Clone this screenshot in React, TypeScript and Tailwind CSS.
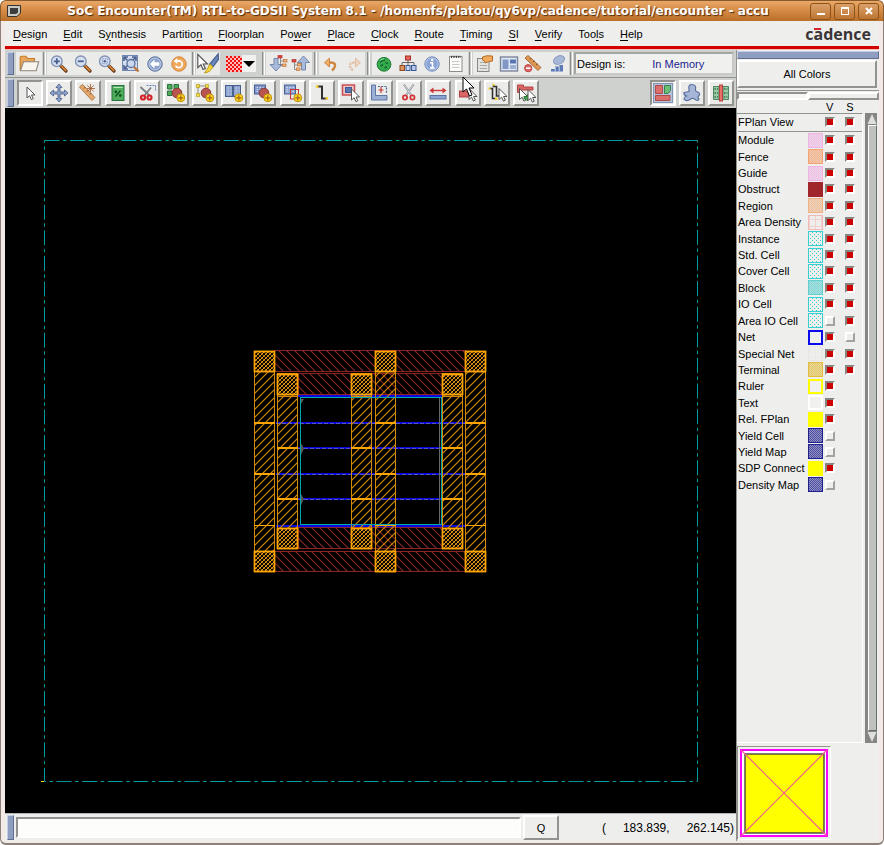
import React, { useId, useState } from "react";

const RAISED = "border-2 border-t-white border-l-white border-b-[#92938f] border-r-[#92938f]";
const SUNKEN = "border-2 border-t-[#92938f] border-l-[#92938f] border-b-white border-r-white";

function Icon({ children, size = "size-5" }: { children: React.ReactNode; size?: string }) {
  return (
    <svg viewBox="0 0 20 20" className={`${size} shrink-0`} fill="none" aria-hidden="true">
      {children}
    </svg>
  );
}

const blue = "#4a6190";
const paleBlue = "#a9bbdd";

function Lens({ children }: { children?: React.ReactNode }) {
  return (
    <Icon>
      <path d="M11.5 11.5 L17 17" stroke="#6b3d1c" strokeWidth="3.4" strokeLinecap="round" />
      <path d="M12 11.7 L16.6 16.4" stroke="#d98436" strokeWidth="1.6" strokeLinecap="round" />
      <circle cx="7.8" cy="7.3" r="5.3" fill="#d7e1f3" stroke="#8393b3" strokeWidth="1.4" />
      {children}
    </Icon>
  );
}

const Pointer = ({ x, y }: { x: number; y: number }) => (
  <path
    transform={`translate(${x} ${y})`}
    d="M0 0 V11 L2.6 8.7 L4.4 12.6 L6.3 11.7 L4.5 8 H8 Z"
    fill="#fff"
    stroke="#555"
    strokeWidth="1"
  />
);

const Plus = () => (
  <>
    <circle cx="14.8" cy="14.8" r="3.9" fill="#ffd91c" stroke="#c08d0a" />
    <path d="M14.8 12.2 V17.4 M12.2 14.8 H17.4" stroke="#a3631a" strokeWidth="1.2" />
  </>
);

const Ball = () => <circle cx="11" cy="10" r="4.8" fill="#b85550" stroke="#8a3532" />;

const Boxes = () => (
  <>
    <path d="M10 6 V8 M4 11 V8.5 H16 V11 M10 8.5 V11" stroke="#666" />
    <rect x="7.5" y="2" width="5" height="4" fill="#e8675c" stroke="#a22d27" />
    <rect x="2" y="11.5" width="4.5" height="5" fill="#e0945c" stroke="#8e4b23" />
    <rect x="8" y="11.5" width="4" height="5" fill="#c9d8f5" stroke="#395a91" />
    <rect x="13.5" y="11.5" width="4.5" height="5" fill="#b8c9eb" stroke="#395a91" />
  </>
);

const MiniTree = ({ x, y }: { x: number; y: number }) => (
  <g transform={`translate(${x} ${y})`}>
    <path d="M3 3 V10.5 H6 M3 6 H7" stroke="#777" strokeWidth="0.8" />
    <rect x="0.5" y="0.5" width="4" height="2.5" fill="#d9433c" stroke="#b83a34" strokeWidth="0.7" />
    <rect x="6" y="4.5" width="3.5" height="2.5" fill="#f5b177" stroke="#c0723a" strokeWidth="0.7" />
    <rect x="5" y="9" width="3.5" height="2.5" fill="#f5b177" stroke="#c0723a" strokeWidth="0.7" />
  </g>
);

const Grid = ({ x, y, w, h, fill, stroke }: { x: number; y: number; w: number; h: number; fill: string; stroke: string }) => (
  <>
    <rect x={x} y={y} width={w} height={h} fill={fill} stroke={stroke} />
    <path d={`M${x + 2} ${y + 2.5} H${x + w - 1} M${x + 2} ${y + h / 2} H${x + w - 1} M${x + 2} ${y + h - 2.5} H${x + w - 1}`} stroke="#e3eafa" strokeWidth="0.8" strokeDasharray="1.5 1.5" />
  </>
);

const Scissors = () => (
  <>
    <path d="M5 1.5 L12.5 12.5 M14.5 1.5 L7 12.5" stroke="#8f959c" strokeWidth="2" />
    <path d="M5.5 2 L12.5 12.5 M14 2 L7 12.5" stroke="#e7eaee" strokeWidth="0.7" />
    <circle cx="6" cy="14.5" r="2.1" stroke="#d3333a" strokeWidth="1.8" />
    <circle cx="13.4" cy="14.5" r="2.1" stroke="#d3333a" strokeWidth="1.8" />
  </>
);

const icons = {
  open: (
    <Icon size="size-[22px]">
      <path d="M2 16 V4 Q2 3 3 3 H7 L9 5 H15 V8" fill="#e9a65b" stroke="#c57a2c" />
      <path d="M2.2 16.2 L5 8 H18.8 L16.5 16.2 Z" fill="#f8f5ee" stroke="#8d8479" />
    </Icon>
  ),
  zoomIn: (
    <Lens>
      <path d="M7.8 4.3 V10.3 M4.8 7.3 H10.8" stroke={blue} strokeWidth="1.8" />
    </Lens>
  ),
  zoomOut: (
    <Lens>
      <path d="M4.8 7.3 H10.8" stroke={blue} strokeWidth="1.8" />
    </Lens>
  ),
  zoomSel: (
    <Lens>
      <rect x="5.3" y="4.8" width="5" height="5" stroke="#7d91ba" strokeDasharray="1.5 1" />
      <circle cx="7.8" cy="7.3" r="1.3" fill={blue} />
    </Lens>
  ),
  fit: (
    <Icon>
      <rect x="1.5" y="1.5" width="15" height="15" fill="#d5def0" stroke="#7187b1" />
      <path d="M3 7 V3 H7 M11 3 H15 V7 M3 11 V15 H7 M3 3 L6.5 6.5 M15 3 L12 6 M3 15 L6.5 11.5" stroke={blue} strokeWidth="1.6" />
      <circle cx="10" cy="9.5" r="4" fill="#cbd8ef" stroke="#5b729c" strokeWidth="1.3" />
      <path d="M13 13 L17.5 17.5" stroke="#bd7435" strokeWidth="2.4" />
    </Icon>
  ),
  prev: (
    <Icon>
      <circle cx="10" cy="10" r="7.2" fill="#8fa5cb" stroke="#5b719b" />
      <circle cx="10" cy="10" r="5.9" stroke="#c3d0e8" strokeWidth="0.8" />
      <path d="M5 10 L9.5 5.5 V8.2 H14.3 V11.8 H9.5 V14.5 Z" fill="#fff" />
    </Icon>
  ),
  redraw: (
    <Icon>
      <circle cx="10" cy="10" r="7.2" fill="#f0a85c" stroke="#d58436" />
      <path d="M7 7 H11 A3.4 3.4 0 1 1 6.8 11.6" stroke="#fff" strokeWidth="1.8" />
      <path d="M4.7 7 L8.3 4 V10 Z" fill="#fff" />
    </Icon>
  ),
  brush: (
    <Icon size="size-6">
      <Pointer x={1.5} y={2} />
      <path d="M18.5 1.5 L11.5 10 L14 12.5 L18.8 6 Z" fill="#6d86bb" stroke="#4a6290" />
      <path d="M11.5 10 L14 12.5 Q12 17 7 17.5 Q10 14 11.5 10 Z" fill="#f6d536" stroke="#b99b22" strokeWidth="0.8" />
    </Icon>
  ),
  descend: (
    <Icon>
      <path d="M6 4.5 H10 V10.5 H14 L8 17 L2 10.5 H6 Z" fill={paleBlue} stroke="#7587a9" />
      <MiniTree x={9.5} y={1} />
    </Icon>
  ),
  ascend: (
    <Icon>
      <path d="M10.5 16 V8.5 H6.5 L12.5 2 L18.5 8.5 H14.5 V16 Z" fill={paleBlue} stroke="#7587a9" />
      <MiniTree x={0.5} y={5} />
    </Icon>
  ),
  undo: (
    <Icon>
      <path d="M6 8.5 H10 Q14.5 8.8 14 12 Q13.5 14.5 11 16.5" stroke="#cf8440" strokeWidth="2.4" />
      <path d="M3.5 8.6 L8.5 4.2 V13 Z" fill="#f0ae67" stroke="#cf8440" />
    </Icon>
  ),
  redo: (
    <Icon>
      <g opacity=".5">
        <path d="M14 8.5 H10 Q5.5 8.8 6 12 Q6.5 14.5 9 16.5" stroke="#dd9d6d" strokeWidth="2.4" strokeDasharray="2.5 0.8" />
        <path d="M16.5 8.6 L11.5 4.2 V13 Z" fill="#efc39c" stroke="#d58f5b" />
      </g>
    </Icon>
  ),
  attribute: (
    <Icon>
      <circle cx="10" cy="10.3" r="6.9" fill="#35ab4e" stroke="#207a35" />
      <path d="M6 8.5 Q8 5.5 11 6.3 M6.5 12.3 L9 10.5 M11.5 8.5 L14 9.8 M10.5 13.8 L13 12.8" stroke="#15702f" strokeWidth="1.8" />
      <path d="M6.2 6.5 Q8 4.8 10 4.8" stroke="#a2e6af" />
    </Icon>
  ),
  hierarchy: (
    <Icon>
      <Boxes />
    </Icon>
  ),
  info: (
    <Icon>
      <circle cx="10" cy="10" r="7.2" fill="#b4c6e9" stroke="#7188b8" />
      <circle cx="10" cy="10" r="5.6" fill="#8aa4d6" />
      <path d="M8 8.8 H10.5 V13.8 M8 13.9 H12.4" stroke="#fff" strokeWidth="1.6" />
      <circle cx="10.2" cy="6" r="1.2" fill="#fff" />
    </Icon>
  ),
  notes: (
    <Icon>
      <rect x="3.5" y="2.5" width="12.5" height="15" fill="#fbfbf9" stroke="#8c8c88" />
      <path d="M5 2.8 H15" stroke="#444" strokeWidth="2.2" strokeDasharray="1.2 1.2" />
      <path d="M6 7.5 H13.5 M6 10.5 H13.5 M6 13.5 H13.5" stroke="#c9cac6" />
    </Icon>
  ),
  properties: (
    <Icon>
      <rect x="2.5" y="4.5" width="11.5" height="13" fill="#e3e4e1" stroke="#888" />
      <path d="M5 8.5 H12 M5 11.5 H12 M5 14.5 H12" stroke="#a9aba8" />
      <path d="M7.5 3 Q11 1 17.5 2 V7 Q13 7.5 10.5 9 L9.5 7 L7.5 6 Z" fill="#f3a95b" stroke="#b06d29" />
    </Icon>
  ),
  panes: (
    <Icon>
      <rect x="1.5" y="3" width="17" height="14" fill="#dfe6f4" stroke="#7c859a" strokeWidth="1.4" />
      <rect x="3.5" y="5.5" width="6" height="9.5" fill="#8197c6" />
      <rect x="11" y="5.5" width="6" height="4" fill="#5a76b2" />
      <rect x="11" y="11" width="6" height="4" fill="#9eb0d6" />
    </Icon>
  ),
  clearRuler: (
    <Icon>
      <path d="M2 4 L5 1.5 L18 13.5 L15 16.5 Z" fill="#df9854" stroke="#a86c36" />
      <path d="M7 5.5 L8.5 4 M10 8 L11.5 6.8 M13 11 L14.5 9.8" stroke="#7e4c22" />
      <circle cx="5.2" cy="14.2" r="3.6" fill="#dc6663" stroke="#bf4444" />
      <path d="M3 14.2 H7.5" stroke="#fff" strokeWidth="1.6" />
    </Icon>
  ),
  summary: (
    <Icon>
      <ellipse cx="12" cy="6" rx="5.8" ry="4" transform="rotate(-25 12 6)" fill="#a7b7d8" stroke="#8b9dc0" />
      <path d="M4 17.5 V15 H8 V12.5 H12 V11 H16 V17.5 Z" fill="#5c79b7" />
      <path d="M8.2 17.5 V13 M12.2 17.5 V11.5" stroke="#cad6ed" />
    </Icon>
  ),
  select: (
    <Icon>
      <Pointer x={7} y={4} />
    </Icon>
  ),
  move: (
    <Icon>
      <path d="M10 1 L13 4.5 H11 V9 H15.5 V7 L19 10 L15.5 13 V11 H11 V15.5 H13 L10 19 L7 15.5 H9 V11 H4.5 V13 L1 10 L4.5 7 V9 H9 V4.5 H7 Z" fill="#94a9d0" stroke="#4f648d" strokeWidth="0.9" />
    </Icon>
  ),
  ruler: (
    <Icon>
      <path d="M1.5 4 L4.5 1.5 L17 14.5 L14 17.5 Z" fill="#e6a76c" stroke="#b07a48" />
      <path d="M6 5.5 L7.5 4 M9 8.5 L10.5 7 M12 11.5 L13.5 10" stroke="#7e4c22" />
      <path d="M12.5 1 V9 M17 5.5 H9 M15.8 2.3 L9.6 8.5 M9.2 2.3 L15.8 8.5" stroke="#a4552a" strokeWidth="0.8" />
    </Icon>
  ),
  density: (
    <Icon>
      <rect x="4" y="2.5" width="12" height="15" fill="#4fae5c" stroke="#2a7040" />
      <path d="M5.5 4.5 H14.5" stroke="#b9e6bd" />
      <path d="M7.5 13.5 L12.5 7.5" stroke="#0d5721" strokeWidth="1.4" />
      <circle cx="7.8" cy="8.8" r="1.4" fill="#0d5721" />
      <circle cx="12.3" cy="12.5" r="1.4" fill="#0d5721" />
    </Icon>
  ),
  cutRow: (
    <Icon>
      <path d="M9.5 2.5 H18.5 M18.5 2.5 V8" stroke="#6984c4" strokeDasharray="2 1" />
      <path d="M3.5 4 L12.5 12.5 M14 4.5 L7.5 12.5" stroke="#7c8085" strokeWidth="1.8" />
      <circle cx="6" cy="14.5" r="2" stroke="#d3222a" strokeWidth="2.2" />
      <circle cx="12.5" cy="14.5" r="2" stroke="#d3222a" strokeWidth="2.2" />
    </Icon>
  ),
  addGroup: (
    <Icon>
      <path d="M1.5 1.5 H6 V6 H1.5 Z M8 1.5 H12.5 V6 H8 Z M1.5 8 H6 V12.5 H1.5 Z" fill="#4cad58" stroke="#2b7040" />
      <Ball />
      <Plus />
    </Icon>
  ),
  addFence: (
    <Icon>
      <path d="M3 3 H12 M3 3 V12" stroke="#888" />
      <path d="M1.5 1.5 H4.5 V4.5 H1.5 Z M10.5 1.5 H13.5 V4.5 H10.5 Z M1.5 10.5 H4.5 V13.5 H1.5 Z" fill="#f8df36" stroke="#b39922" strokeWidth="0.7" />
      <Ball />
      <Plus />
    </Icon>
  ),
  addGuide: (
    <Icon>
      <Grid x={1.5} y={2.5} w={7} h={11} fill="#8fa5d1" stroke={blue} />
      <Grid x={9.5} y={2.5} w={7} h={11} fill="#8fa5d1" stroke={blue} />
      <Plus />
    </Icon>
  ),
  addRegion: (
    <Icon>
      <Grid x={1.5} y={2} w={11} h={9} fill="#7f96c9" stroke={blue} />
      <Ball />
      <Plus />
    </Icon>
  ),
  addBlockage: (
    <Icon>
      <Grid x={1.5} y={2} w={11} h={9} fill="#8fa5d1" stroke={blue} />
      <path d="M7.5 6.5 H15.5 V16 H7.5 Z" stroke="#c73535" strokeWidth="1.1" />
      <Plus />
    </Icon>
  ),
  wire: (
    <Icon>
      <path d="M5.5 3.5 H10 V15.5 H15" stroke="#303030" strokeWidth="2" />
      <path d="M4 2.3 H6.5 V4.8 H4 Z M13.5 14 H16 V16.5 H13.5 Z" fill="#f2cf2e" />
    </Icon>
  ),
  moveBox: (
    <Icon>
      <rect x="1.5" y="2" width="12" height="10" fill="#eec8c8" stroke="#cb4c50" strokeWidth="1.5" />
      <rect x="4.5" y="4.5" width="6" height="5" fill="#5875b4" stroke="#3e5996" />
      <Pointer x={10.5} y={6} />
    </Icon>
  ),
  rowBox: (
    <Icon>
      <path d="M1.5 2 H5.5 V12.5 H17 V17 H1.5 Z" fill="#9cafd6" stroke="#5f76a3" />
      <path d="M8 3.5 H16.5 V10" stroke={blue} strokeDasharray="2 1.2" strokeWidth="1.2" />
      <path d="M11 4 V10 M8.5 7 H13.5" stroke="#c73535" strokeWidth="1.2" />
    </Icon>
  ),
  cut: (
    <Icon>
      <Scissors />
    </Icon>
  ),
  stretch: (
    <Icon>
      <path d="M3 7.5 H17" stroke="#cc3636" strokeWidth="1.4" />
      <path d="M1.5 7.5 L5.5 4.5 V10.5 Z M18.5 7.5 L14.5 4.5 V10.5 Z" fill="#cc3636" />
      <rect x="2" y="12.5" width="16" height="3.5" fill="#8da4d2" stroke="#5b719d" />
    </Icon>
  ),
  moveWire: (
    <Icon>
      <rect x="1.5" y="8" width="12" height="6" fill="#d96564" stroke="#af4444" />
      <Pointer x={11} y={5.5} />
    </Icon>
  ),
  editWire: (
    <Icon>
      <path d="M2.5 5.5 H5.5 V15.5 H9 M6.5 1.5 V3.5 H9.5 V13 H12" stroke="#303030" strokeWidth="1.6" />
      <path d="M1.5 4.5 H3.5 V6.5 H1.5 Z M8 14.5 H10.5 V17 H8 Z M5.5 0.8 H7.5 V2.8 H5.5 Z" fill="#f2cf2e" />
      <Pointer x={12} y={5.5} />
    </Icon>
  ),
  changeLayer: (
    <Icon>
      <path d="M1.5 2 H7.5 V4 H17 V7 H5.5 V9.5 H1.5 Z" fill="#d96564" stroke="#b34848" />
      <Pointer x={3.5} y={5.5} />
      <path d="M8 13.5 H11 V11.5 L14.5 14.7 L11 18 V16 H8 Z" fill="#43b052" stroke="#206c2e" strokeWidth="0.7" />
      <Pointer x={12} y={6.5} />
    </Icon>
  ),
  floorplanView: (
    <Icon>
      <rect x="0.5" y="0.5" width="19" height="19" fill="#b4c2dc" stroke="#8194b6" />
      <path d="M2.5 2.5 H9.5 V10.5 H2.5 Z M2.5 12.5 H17 V17.5 H2.5 Z" fill="#da6e6a" stroke="#b04a49" />
      <path d="M11.5 2.5 H17.5 V7.5 L15 10.5 H11.5 Z" fill="#6abf75" stroke="#33854b" />
    </Icon>
  ),
  amoebaView: (
    <Icon>
      <path d="M7 6 Q6 1.5 10 1.5 Q14.5 1.5 13.5 6.5 Q13 8.5 16 9 Q19 11 16.5 13 Q15 14.5 17 16 Q16.5 18 14 17 Q10.5 14 8 16.5 Q4 19 2 16 Q2.5 13.5 4.5 13 Q1.5 12 2 9.5 Q5 9 7 8.5 Z" fill="#a5b6d9" stroke="#5b719d" strokeWidth="1.2" />
    </Icon>
  ),
  physicalView: (
    <Icon>
      <path d="M2.5 3.5 H8 V16.5 H2.5 Z M12 3.5 H17.5 V16.5 H12 Z" fill="#9bcaa6" stroke="#4d8560" />
      <path d="M3.5 6 H7 M3.5 10 H7 M3.5 14 H7 M13 6 H16.5 M13 10 H16.5 M13 14 H16.5" stroke="#3b704c" strokeWidth="1.4" strokeDasharray="1.5 1" />
      <rect x="8.5" y="2" width="3" height="16" fill="#e57168" stroke="#b5433d" />
    </Icon>
  ),
};

type IconName = keyof typeof icons;

const menus: [string, number][] = [
  ["Design", 0], ["Edit", 0], ["Synthesis", 1], ["Partition", 8], ["Floorplan", 0], ["Power", 2], ["Place", 0],
  ["Clock", 0], ["Route", 0], ["Timing", 0], ["SI", 0], ["Verify", 0], ["Tools", 3], ["Help", 0],
];

function Handle() {
  return <div className="w-[7px] shrink-0 border border-t-[#c4cfe6] border-l-[#c4cfe6] border-r-[#5f6f92] border-b-[#5f6f92] bg-[#8e9dc0]" />;
}

function Separator({ wide = false }: { wide?: boolean }) {
  return <div className={`${wide ? "mx-[2px]" : "mx-px"} w-[3px] shrink-0 border-r border-l border-r-white border-l-[#8c8d8a] bg-[#c9cac7]`} />;
}

function ToolGroup({ names, cell = "w-6" }: { names: IconName[]; cell?: string }) {
  return (
    <div className="flex shrink-0 bg-[#ebecea]">
      {names.map((n) => (
        <button key={n} type="button" aria-label={n} className={`${cell} flex items-center justify-center`}>
          {icons[n]}
        </button>
      ))}
    </div>
  );
}

function ToolButton({ name, pressed = false }: { name: IconName; pressed?: boolean }) {
  return (
    <button
      type="button"
      aria-label={name}
      aria-pressed={pressed}
      className={`flex size-[26px] shrink-0 items-center justify-center bg-[#ebecea] ${pressed ? SUNKEN : RAISED}`}
    >
      {icons[name]}
    </button>
  );
}

const editTools: IconName[] = [
  "select", "move", "ruler", "density", "cutRow", "addGroup", "addFence", "addGuide", "addRegion",
  "addBlockage", "wire", "moveBox", "rowBox", "cut", "stretch", "moveWire", "editWire", "changeLayer",
];

type Fill = "fine" | "dots" | "solid" | "empty" | "grid";
interface Layer {
  name: string;
  fill?: Fill;
  color?: string;
  v: boolean;
  s?: boolean;
}

const layers: Layer[] = [
  { name: "Module", fill: "fine", color: "#eeb4e4", v: true, s: true },
  { name: "Fence", fill: "fine", color: "#f3a271", v: true, s: true },
  { name: "Guide", fill: "fine", color: "#eeb4e4", v: true, s: true },
  { name: "Obstruct", fill: "solid", color: "#a0262b", v: true, s: true },
  { name: "Region", fill: "fine", color: "#eeb283", v: true, s: true },
  { name: "Area Density", fill: "grid", color: "#f2b9b9", v: true, s: true },
  { name: "Instance", fill: "dots", color: "#35d0cf", v: true, s: true },
  { name: "Std. Cell", fill: "dots", color: "#35d0cf", v: true, s: true },
  { name: "Cover Cell", fill: "dots", color: "#35d0cf", v: true, s: true },
  { name: "Block", fill: "fine", color: "#5fcfcf", v: true, s: true },
  { name: "IO Cell", fill: "dots", color: "#35d0cf", v: true, s: true },
  { name: "Area IO Cell", fill: "dots", color: "#35d0cf", v: false, s: true },
  { name: "Net", fill: "empty", color: "#0a0aee", v: true, s: false },
  { name: "Special Net", fill: "grid", color: "#e6e7e6", v: true, s: true },
  { name: "Terminal", fill: "fine", color: "#e3bc3c", v: true, s: true },
  { name: "Ruler", fill: "empty", color: "#ffff00", v: true },
  { name: "Text", fill: "empty", color: "#ffffff", v: true },
  { name: "Rel. FPlan", fill: "solid", color: "#ffff00", v: true },
  { name: "Yield Cell", fill: "fine", color: "#20208f", v: false },
  { name: "Yield Map", fill: "fine", color: "#20208f", v: false },
  { name: "SDP Connect", fill: "solid", color: "#ffff00", v: true },
  { name: "Density Map", fill: "fine", color: "#20208f", v: false },
];

function Swatch({ fill, color }: { fill: Fill; color: string }) {
  const id = useId();
  const thick = fill === "empty" ? 2 : 1;
  return (
    <svg viewBox="0 0 15 15" className="size-[15px]" aria-hidden="true">
      <defs>
        {fill === "fine" && (
          <pattern id={id} width="2" height="2" patternUnits="userSpaceOnUse">
            <rect width="2" height="2" fill={color} opacity=".45" />
            <path d="M0 0h1v1h-1z M1 1h1v1h-1z" fill={color} opacity=".6" />
          </pattern>
        )}
        {fill === "dots" && (
          <pattern id={id} width="4" height="4" patternUnits="userSpaceOnUse">
            <path d="M0 1h1v1h-1z M2 3h1v1h-1z" fill={color} />
          </pattern>
        )}
        {fill === "grid" && (
          <pattern id={id} width="6" height="7" patternUnits="userSpaceOnUse">
            <path d="M1 0h1v7h-1z M0 4h6v1h-6z" fill={color} opacity=".6" />
          </pattern>
        )}
      </defs>
      <rect width="15" height="15" fill={fill === "solid" ? color : fill === "empty" ? "#f0f0ee" : `url(#${id})`} />
      <rect x={thick / 2} y={thick / 2} width={15 - thick} height={15 - thick} fill="none" stroke={color} strokeWidth={thick} />
    </svg>
  );
}

function Tick({ label, initial }: { label: string; initial: boolean }) {
  const [on, setOn] = useState(initial);
  return (
    <input
      type="checkbox"
      aria-label={label}
      checked={on}
      onChange={() => setOn(!on)}
      className="size-[10px] appearance-none justify-self-center border-2 border-t-white border-r-[#a2a39f] border-b-[#a2a39f] border-l-white bg-[#eeefed] checked:border-t-[#858682] checked:border-r-white checked:border-b-white checked:border-l-[#858682] checked:bg-[#cc0000]"
    />
  );
}

function LayerRow({ layer }: { layer: Layer }) {
  return (
    <div className="grid grid-cols-[70px_16px_11px_30px] items-center">
      <span className="whitespace-nowrap">{layer.name}</span>
      <span>{layer.fill && layer.color && <Swatch fill={layer.fill} color={layer.color} />}</span>
      <Tick label={`${layer.name} visible`} initial={layer.v} />
      {layer.s !== undefined && <Tick label={`${layer.name} selectable`} initial={layer.s} />}
    </div>
  );
}

/* Power rings, stripes and rows of the chip, in design-window units. */
const outerCols = [254, 375, 465];
const innerCols = [277, 351, 442];

function Floorplan() {
  return (
    <svg viewBox="5 108 731 705" className="size-full" role="img" aria-label="Floorplan">
      <defs>
        <pattern id="hatch" width="8" height="8" patternUnits="userSpaceOnUse">
          <path d="M-1 1 L1 -1 M0 8 L8 0 M7 9 L9 7" stroke="#d28a08" strokeWidth="1.2" />
        </pattern>
        <pattern id="hatchRed" width="8" height="8" patternUnits="userSpaceOnUse">
          <path d="M-1 -1 L9 9 M-1 7 L1 9 M7 -1 L9 1" stroke="#8c2626" strokeWidth="1.1" />
        </pattern>
        <pattern id="via" width="4" height="4" patternUnits="userSpaceOnUse">
          <path d="M0 4 L4 0 M-1 1 L1 -1 M3 5 L5 3" stroke="#f0a010" strokeWidth="1" />
          <path d="M0 0 L4 4" stroke="#a86c14" strokeWidth="0.9" />
        </pattern>
      </defs>
      <rect x="44.5" y="140.5" width="653" height="641" fill="none" stroke="#009c9c" strokeDasharray="15 3.5 3.5 3.6" />
      <path d="M41 781.5 H44" stroke="#f0e000" />
      <g fill="url(#hatchRed)" stroke="#8c2626">
        <rect x="274.5" y="350.5" width="191" height="21" />
        <rect x="298.5" y="373.5" width="144" height="21" />
        <rect x="298.5" y="527.5" width="144" height="21" />
        <rect x="274.5" y="551.5" width="191" height="20" />
      </g>
      <g stroke="#0a0ae0" strokeWidth="2">
        <path d="M298 396 H442 M276 423 H465 M298 448 H442 M276 474 H465 M298 499 H442 M276 526 H465" />
      </g>
      <g stroke="#5858b8" strokeDasharray="4 2">
        <path d="M276 423.5 H465 M298 448.5 H442 M276 474.5 H465 M298 499.5 H442" />
      </g>
      <g fill="#555">
        <path d="M301 399 H304 L301 404 Z M301 443 L304 448.5 L301 455 Z M301 494 L304 499 L301 505 Z" />
      </g>
      <path d="M439.5 397 V525" stroke="#666" />
      <g stroke="#d28a08" fill="url(#hatch)">
        {outerCols.map((x) => (
          <rect key={x} x={x + 0.5} y="351.5" width="20" height="219" />
        ))}
        {innerCols.map((x) => (
          <g key={x}>
            <rect x={x + 0.5} y="373.5" width="20" height="175" />
            <path d={`M${x} 396.5 H${x + 21}`} />
          </g>
        ))}
      </g>
      <rect x="300.5" y="397.5" width="141" height="127" fill="none" stroke="#00a9a9" />
      <g stroke="#ffa500" strokeWidth="1.4">
        {outerCols.map((x) => (
          <g key={x}>
            <path d={`M${x + 0.5} 351.5 h20 v20 h-20 Z M${x + 0.5} 551.5 h20 v20 h-20 Z`} fill="#000" />
            <path d={`M${x + 0.5} 351.5 h20 v20 h-20 Z M${x + 0.5} 551.5 h20 v20 h-20 Z`} fill="url(#via)" />
          </g>
        ))}
        {innerCols.map((x) => (
          <g key={x}>
            <path d={`M${x + 0.5} 374.5 h20 v20 h-20 Z M${x + 0.5} 528.5 h20 v20 h-20 Z`} fill="#000" />
            <path d={`M${x + 0.5} 374.5 h20 v20 h-20 Z M${x + 0.5} 528.5 h20 v20 h-20 Z`} fill="url(#via)" />
          </g>
        ))}
      </g>
      <g stroke="#ffa500" strokeWidth="2">
        {outerCols.map((x) => (
          <path key={x} d={`M${x} 423 h21 M${x} 474 h21`} />
        ))}
        {outerCols.map((x) => (
          <path key={`t${x}`} d={`M${x} 525.5 h21`} strokeWidth="1" />
        ))}
        {innerCols.map((x) => (
          <path key={x} d={`M${x} 448 h21 M${x} 499 h21`} />
        ))}
      </g>
    </svg>
  );
}

function TitleBar() {
  const btn = "flex h-[17px] w-[21px] items-center justify-center rounded-[3px] border border-[#8b5219] bg-linear-to-b from-[#dca069] to-[#bd7530]";
  return (
    <header className="flex h-[21px] shrink-0 items-center rounded-t-md border-x border-t border-[#8a5a2c] bg-linear-to-b from-[#e9a868] via-[#d48a43] to-[#b96f28] pr-[4px] pl-[6px]">
      <svg viewBox="0 0 14 12" className="h-3 w-3.5" aria-hidden="true">
        <path d="M.5 .5 H13.5 V8 L10 11.5 H.5 Z" fill="#c9c8c3" stroke="#333" />
        <path d="M3 3 H11 V7.5 L9 9 H3 Z" fill="#3d3d3d" />
      </svg>
      <h1 className="min-w-0 flex-1 truncate pl-[5px] text-center font-['DejaVu_Sans',sans-serif] text-[12px] leading-5 font-bold whitespace-nowrap text-white [text-shadow:1px_1px_1px_#4a2a0c]">
        SoC Encounter(TM) RTL-to-GDSII System 8.1 - /homenfs/platou/qy6vp/cadence/tutorial/encounter - accu
      </h1>
      <div className="flex shrink-0 gap-[3px]">
        <button type="button" aria-label="Minimize" className={btn}>
          <span className="mt-1.5 h-[2px] w-2 bg-white" />
        </button>
        <button type="button" aria-label="Maximize" className={btn}>
          <span className="size-2 border border-t-2 border-white" />
        </button>
        <button type="button" aria-label="Close" className={btn}>
          <svg viewBox="0 0 8 8" className="size-2" aria-hidden="true">
            <path d="M1 1 L7 7 M7 1 L1 7" stroke="#fff" strokeWidth="2" />
          </svg>
        </button>
      </div>
    </header>
  );
}

function MenuBar() {
  return (
    <nav className="flex h-[25px] shrink-0 items-center gap-[16px] pr-2 pl-2">
      {menus.map(([m, k]) => (
        <button key={m} type="button">
          {m.slice(0, k)}
          <span className="underline underline-offset-2">{m[k]}</span>
          {m.slice(k + 1)}
        </button>
      ))}
      <span className="relative ml-auto font-['Open_Sans',sans-serif] text-[16px] leading-5 font-bold text-[#3a3536]">
        cādence
        <span className="absolute top-[4px] left-[9px] h-[2px] w-[7px] bg-[#d9262c]" />
      </span>
    </nav>
  );
}

function MainToolbar() {
  return (
    <div className="flex h-7 shrink-0 border-b border-[#92938f] bg-[#cfd1ce] py-[2px] pl-[2px]">
      <Handle />
      <div className="ml-[2px] flex">
        <ToolGroup names={["open"]} cell="w-[26px]" />
        <Separator />
        <ToolGroup names={["zoomIn", "zoomOut", "zoomSel", "fit", "prev", "redraw"]} />
        <Separator />
        <ToolGroup names={["brush"]} />
      </div>
      <button type="button" aria-label="Highlight pattern" className="mr-[5px] ml-[6px] flex items-center">
        <svg viewBox="0 0 16 16" className="size-4" shapeRendering="crispEdges" aria-hidden="true">
          <defs>
            <pattern id="redcheck" width="4" height="4" patternUnits="userSpaceOnUse">
              <rect width="4" height="4" fill="#fbb" />
              <path d="M0 0h2v2h-2z M2 2h2v2h-2z" fill="#f01010" />
            </pattern>
          </defs>
          <rect width="16" height="16" fill="url(#redcheck)" />
        </svg>
        <span className="flex h-[17px] w-3.5 items-center justify-center bg-[#f1f2f0]">
          <svg viewBox="0 0 12 6" className="h-1.5 w-3" aria-hidden="true">
            <path d="M0 0 H12 L6 6 Z" fill="#000" />
          </svg>
        </span>
      </button>
      <Separator />
      <ToolGroup names={["descend", "ascend"]} cell="w-[23px]" />
      <Separator wide />
      <ToolGroup names={["undo", "redo"]} cell="w-[23px]" />
      <Separator wide />
      <ToolGroup names={["attribute", "hierarchy", "info", "notes"]} />
      <Separator />
      <ToolGroup names={["properties", "panes", "clearRuler", "summary"]} />
      <Separator />
      <div className="mr-[2px] flex min-w-0 flex-1 items-center gap-[27px] border-2 border-[#a5a6a3] border-r-[#c9cac7] border-b-[#c9cac7] bg-[#f0f1ef] pl-px whitespace-nowrap">
        <span>Design is:</span>
        <span className="text-[#1c1c8c]">In Memory</span>
      </div>
    </div>
  );
}

function EditToolbar() {
  return (
    <div className="relative flex h-[30px] shrink-0 items-center bg-[#cfd1ce] pl-[2px]">
      <div className="flex self-stretch py-px">
        <Handle />
      </div>
      <div className="ml-[3px] flex w-[522px] justify-between">
        {editTools.map((n, i) => (
          <ToolButton key={n} name={n} pressed={i === 0} />
        ))}
      </div>
      <div className="mr-[2px] ml-auto flex gap-[3px]">
        <ToolButton name="floorplanView" pressed />
        <ToolButton name="amoebaView" />
        <ToolButton name="physicalView" />
      </div>
      <svg viewBox="0 0 14 22" className="absolute -top-[2px] left-[457px] z-10 h-[22px] w-3.5" aria-hidden="true">
        <path d="M1 1 V16 L4.5 13 L7.5 20 L10 19 L7 12 H12 Z" fill="#fff" stroke="#000" />
      </svg>
    </div>
  );
}

function StatusBar() {
  return (
    <div className="flex h-[28px] shrink-0 border-t border-[#b5b6b3] py-px pl-[2px]">
      <Handle />
      <input aria-label="Command" className={`my-[2px] ml-[2px] min-w-0 flex-1 bg-[#fdfefc] px-1 ${SUNKEN} border-b-[#e3e4e1]`} />
      <button type="button" className={`ml-[2px] w-[36px] shrink-0 bg-[#eeefed] ${RAISED}`}>
        Q
      </button>
      <div className="ml-[43px] flex shrink-0 items-center gap-[17px] pr-[2px] text-[12px] whitespace-nowrap">
        <span>(</span>
        <span>183.839,</span>
        <span>262.145)</span>
      </div>
    </div>
  );
}

function ColorPanel() {
  return (
    <aside className="flex w-[143px] shrink-0 flex-col border-l border-[#92938f]">
      <div className="mt-px h-[8px] border border-t-[#c4cfe6] border-l-[#c4cfe6] border-r-[#5f6f92] border-b-[#5f6f92] bg-[#8e9dc0]" />
      <button type="button" className={`mt-px mr-[2px] h-[28px] shrink-0 ${RAISED}`}>
        All Colors
      </button>
      <div className="mt-[2px] flex h-[10px] shrink-0 border-t border-[#92938f] pt-px">
        <div className={`flex-1 bg-[#f6f7f5] ${SUNKEN}`} />
        <div className={`flex-1 ${RAISED}`} />
      </div>
      <div className="flex h-[13px] shrink-0 items-end gap-[13px] pl-[89px] leading-[11px]">
        <span>V</span>
        <span>S</span>
      </div>
      <div className="flex min-h-0 flex-1">
        <div className="min-w-0 flex-1 border-t border-r border-b border-t-[#92938f] border-r-white border-b-white pl-px">
          <div className="flex h-[18px] border-b border-[#92938f] pb-px">
            <LayerRow layer={{ name: "FPlan View", v: true, s: true }} />
          </div>
          <div className="grid h-[361px] auto-rows-fr">
            {layers.map((l) => (
              <LayerRow key={l.name} layer={l} />
            ))}
          </div>
        </div>
        <div className="mr-[2px] ml-[2px] flex w-[12px] flex-col items-center border-l-2 border-[#858682] bg-[#858682]">
          <svg viewBox="0 0 10 12" className="h-3 w-2.5" aria-hidden="true">
            <path d="M5 1 L9.5 11 H.5 Z" fill="#dfe0dd" />
          </svg>
          <div className="w-[9px] flex-1 border border-t-white border-r-[#6d6e6b] border-b-[#6d6e6b] border-l-white bg-[#bfc1be]" />
          <svg viewBox="0 0 10 12" className="h-3 w-2.5" aria-hidden="true">
            <path d="M5 11 L9.5 1 H.5 Z" fill="#dfe0dd" />
          </svg>
        </div>
      </div>
      <div className="mt-[3px] mb-px w-[94px] shrink-0 border border-t-[#92938f] border-r-white border-b-white border-l-[#92938f] p-[2px]">
        <svg viewBox="0 0 88 88" className="size-[88px]" role="img" aria-label="World view">
          <rect x="1" y="1" width="86" height="86" fill="#fff" stroke="#ff00ff" strokeWidth="2" />
          <rect x="5" y="5" width="79" height="79" fill="#ffff00" stroke="#444" strokeWidth="1.4" />
          <path d="M1 1 L87 87 M87 1 L1 87" stroke="#f0608c" strokeWidth="1.2" />
        </svg>
      </div>
    </aside>
  );
}

export default function App() {
  return (
    <div className="h-screen bg-white">
      <div className="flex h-full flex-col overflow-hidden font-['Liberation_Sans',Arial,sans-serif] text-[11px] leading-[14px] text-black">
        <TitleBar />
        <div className="flex min-h-0 flex-1 flex-col rounded-b-md border-x border-b-2 border-[#8b817a] bg-[#f3e9e6] px-[4px] pb-[2px]">
          <div className="flex min-h-0 flex-1 flex-col bg-[#eeefed]">
            <MenuBar />
            <div className="h-[4px] shrink-0 border-b border-[#f3c0bd] bg-[#d40000]" />
            <div className="flex min-h-0 flex-1">
              <main className="flex min-w-0 flex-1 flex-col">
                <MainToolbar />
                <EditToolbar />
                <div className="min-h-0 flex-1 bg-black">
                  <Floorplan />
                </div>
                <StatusBar />
              </main>
              <ColorPanel />
            </div>
          </div>
        </div>
      </div>
    </div>
  );
}
